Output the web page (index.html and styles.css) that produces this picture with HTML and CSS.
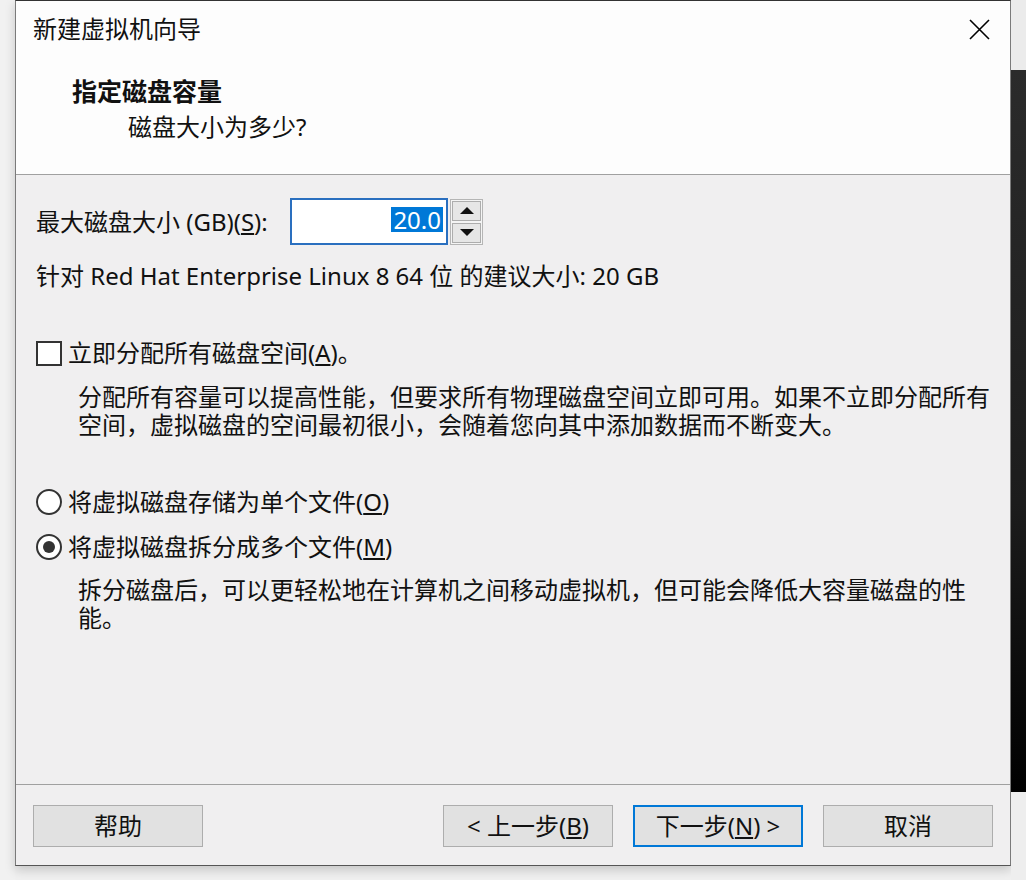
FILE: index.html
```html
<!doctype html>
<html lang="zh-CN">

<head>
	<meta charset="utf-8">
	<title>新建虚拟机向导</title>
	<link rel="stylesheet" href="styles.css">
</head>

<body>
	<div class="screen">
		<div class="edge-left"></div>

		<div class="wizard">
			<header class="wizard-head">
				<div class="title-row">
					<span class="title">新建虚拟机向导</span>
					<button class="close" type="button" aria-label="关闭">
						<svg width="21" height="21" viewBox="0 0 21 21">
							<path d="M1 1 L20 20 M20 1 L1 20" stroke="#000" stroke-width="1.6" fill="none" />
						</svg>
					</button>
				</div>
				<h1 class="step-title">指定磁盘容量</h1>
				<p class="step-sub">磁盘大小为多少?</p>
			</header>

			<main class="wizard-body">
				<div class="size-row">
					<label class="size-label">最大磁盘大小 (GB)(<u>S</u>):</label>
					<div class="spin-field"><span class="sel">20.0</span></div>
					<div class="spin-btns">
						<button class="spin" type="button"><span class="tri-up"></span></button>
						<button class="spin" type="button"><span class="tri-down"></span></button>
					</div>
				</div>
				<p class="hint">针对 Red Hat Enterprise Linux 8 64 位 的建议大小: 20 GB</p>

				<label class="check-row"><span class="checkbox"></span>立即分配所有磁盘空间(<u>A</u>)。</label>
				<p class="desc">分配所有容量可以提高性能，但要求所有物理磁盘空间立即可用。如果不立即分配所有空间，虚拟磁盘的空间最初很小，会随着您向其中添加数据而不断变大。</p>

				<label class="radio-row first"><span class="radio"></span>将虚拟磁盘存储为单个文件(<u>O</u>)</label>
				<label class="radio-row"><span class="radio checked"></span>将虚拟磁盘拆分成多个文件(<u>M</u>)</label>
				<p class="desc">拆分磁盘后，可以更轻松地在计算机之间移动虚拟机，但可能会降低大容量磁盘的性能。</p>
			</main>

			<footer class="wizard-foot">
				<button class="btn" type="button">帮助</button>
				<span class="spacer"></span>
				<button class="btn" type="button">&lt; 上一步(<u>B</u>)</button>
				<button class="btn default" type="button">下一步(<u>N</u>) &gt;</button>
				<button class="btn" type="button">取消</button>
			</footer>
		</div>

		<div class="edge-right">
			<div class="er-top"></div>
			<div class="er-dark"></div>
			<div class="er-bottom"></div>
		</div>
	</div>
</body>

</html>
```

FILE: styles.css
```css
* {
	box-sizing: border-box;
}

html,
body {
	margin: 0;
	background: #f0f0f0;
}

body {
	font-family: "Noto Sans", "Noto Sans CJK SC", "Microsoft YaHei", sans-serif;
	font-size: 24px;
	color: #111;
}

.screen {
	display: flex;
	width: 1026px;
	height: 880px;
}

.edge-left {
	flex: 0 0 15px;
	background: #f1f1f1;
}

.edge-right {
	flex: 0 0 15px;
	display: flex;
	flex-direction: column;
}

.er-top {
	height: 70px;
	background: #ebebeb;
}

.er-dark {
	height: 722px;
	background: linear-gradient(#2b2b2b, #1c1c1c 60%, #000);
}

.er-bottom {
	flex: 1;
	background: #eeeeee;
}

.wizard {
	flex: 0 0 996px;
	min-width: 0;
	height: 866px;
	display: flex;
	flex-direction: column;
	background: #f0eff0;
	border: 1px solid #7a7a7a;
	border-top-color: #333;
	border-bottom-color: #555;
	box-shadow: 0 4px 10px rgba(0, 0, 0, 0.18);
}

/* header */

.wizard-head {
	height: 174px;
	padding: 13px 20px 0 17px;
	background: #fdfdfd;
	border-bottom: 1px solid #a0a0a0;
}

.title-row {
	display: flex;
	align-items: center;
	justify-content: space-between;
	height: 30px;
	line-height: 30px;
}

.close {
	display: block;
	padding: 0;
	margin-top: 0;
	border: 0;
	background: none;
}

.close svg {
	display: block;
}

.step-title {
	margin: 31px 0 0 39px;
	font-family: "Noto Sans CJK SC", sans-serif;
	font-size: 25px;
	font-weight: bold;
	line-height: 30px;
}

.step-sub {
	margin: 7px 0 0 95px;
	line-height: 30px;
}

/* body */

.wizard-body {
	flex: 1;
	min-width: 0;
	padding: 23px 0 0 20px;
	border-bottom: 1px solid #a0a0a0;
}

.size-row {
	display: flex;
	align-items: center;
	height: 47px;
}

.size-label {
	flex: 0 0 254px;
	line-height: 30px;
}

.spin-field {
	width: 158px;
	height: 47px;
	padding: 3px 3px 0 0;
	text-align: right;
	background: #fff;
	border: 2px solid #2a6fbf;
	line-height: 34px;
}

.sel {
	display: inline-block;
	padding: 0 2px;
	line-height: 25px;
	background: #0078d7;
	color: #fff;
}

.spin-btns {
	display: flex;
	flex-direction: column;
	margin-left: 2px;
	width: 33px;
	height: 46px;
	border: 1px solid #b5b5b5;
	background: #f4f4f4;
}

.spin {
	flex: 1;
	display: flex;
	align-items: center;
	justify-content: center;
	padding: 0;
	margin: 1px;
	background: #e6e6e6;
	border: 1px solid #adadad;
}

.tri-up,
.tri-down {
	width: 0;
	height: 0;
	border-left: 7px solid transparent;
	border-right: 7px solid transparent;
}

.tri-up {
	border-bottom: 7px solid #111;
}

.tri-down {
	border-top: 7px solid #111;
}

.hint {
	margin: 16px 0 0;
	line-height: 30px;
}

.check-row,
.radio-row {
	display: flex;
	align-items: center;
	line-height: 30px;
}

.check-row {
	margin-top: 47px;
}

.radio-row {
	margin-top: 15px;
}

.radio-row.first {
	margin-top: 48px;
}

.checkbox {
	flex: 0 0 26px;
	height: 25px;
	margin-right: 6px;
	background: #fff;
	border: 2px solid #333;
}

.radio {
	flex: 0 0 26px;
	height: 26px;
	margin-right: 6px;
	display: flex;
	align-items: center;
	justify-content: center;
	border: 2px solid #333;
	border-radius: 50%;
	background: #fff;
}

.radio.checked::after {
	content: "";
	width: 12px;
	height: 12px;
	border-radius: 50%;
	background: #333;
}

.desc {
	width: 914px;
	margin: 15px 0 0 42px;
	line-height: 28px;
}

.radio-row + .desc {
	margin-top: 14px;
}

/* footer */

.wizard-foot {
	display: flex;
	gap: 20px;
	height: 80px;
	padding: 20px 17px 0;
}

.spacer {
	flex: 1;
}

.btn {
	width: 170px;
	height: 42px;
	padding: 0;
	font: inherit;
	color: #111;
	line-height: 38px;
	background: #e1e1e1;
	border: 1px solid #adadad;
}

.btn.default {
	border: 2px solid #0078d7;
}
```
